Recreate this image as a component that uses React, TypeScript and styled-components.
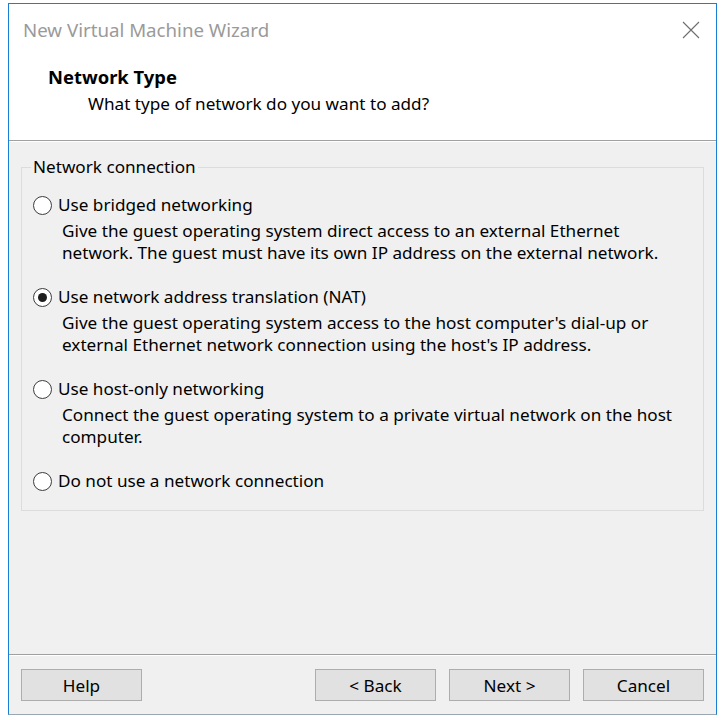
import React from "react";
import styled, { createGlobalStyle } from "styled-components";

const Global = createGlobalStyle`
  html, body { margin: 0; padding: 0; background: #ffffff; }
  body { font-family: "Noto Sans", "Open Sans", sans-serif; }
  * { box-sizing: border-box; }
`;

const Page = styled.div`
  padding: 3px 0 0 8px;
  width: 723px;
  height: 720px;
`;

const Window = styled.div`
  width: 709px;
  height: 712px;
  border: 1px solid #1a7fd2;
  border-bottom-color: #9aa6b0;
  display: flex;
  flex-direction: column;
  background: #f0f0f0;
  font-size: 17.15px;
  color: #000;
`;

const TitleBar = styled.div`
  height: 51px;
  background: #fff;
  display: flex;
  align-items: center;
  justify-content: space-between;
  padding: 0 16px 0 14px;
`;

const Title = styled.div`
  font-size: 18.7px;
  color: #9a9a9a;
`;

const CloseIcon = styled.svg`
  width: 18px;
  height: 18px;
  display: block;
`;

const Header = styled.div`
  height: 85px;
  background: #fff;
  padding: 11px 0 0 39px;
  display: flex;
  flex-direction: column;
`;

const HeaderTitle = styled.div`
  font-weight: 700;
  font-size: 18.4px;
  line-height: 22px;
`;

const HeaderSub = styled.div`
  line-height: 22px;
  margin: 5px 0 0 40px;
`;

const Etched = styled.div`
  height: 2px;
  border-top: 1px solid #a0a0a0;
  border-bottom: 1px solid #ffffff;
`;

const Body = styled.div`
  flex: 1;
  padding: 15px 12px 0 12px;
`;

const Group = styled.fieldset`
  margin: 0;
  border: 1px solid #dcdcdc;
  padding: 17px 0 18px 0;
`;

const Legend = styled.legend`
  padding: 0 2px;
  margin-left: 9px;
  line-height: 20px;
`;

const OptionList = styled.div`
  display: flex;
  flex-direction: column;
  gap: 22px;
  padding-left: 11px;
`;

const Option = styled.div`
  display: flex;
  flex-direction: column;
`;

const RadioRow = styled.label`
  display: flex;
  align-items: center;
  line-height: 22px;
  gap: 6px;
`;

const RadioCircle = styled.span<{ $checked?: boolean }>`
  flex-shrink: 0;
  width: 19px;
  height: 19px;
  border-radius: 50%;
  border: 1.5px solid #3c3c3c;
  background: #fff;
  display: flex;
  align-items: center;
  justify-content: center;
  &::after {
    content: "";
    width: 9px;
    height: 9px;
    border-radius: 50%;
    background: #1e1e1e;
    display: ${(p) => (p.$checked ? "block" : "none")};
  }
`;

const Desc = styled.div`
  margin: 4px 0 0 29px;
  line-height: 22px;
`;

const Footer = styled.div`
  height: 58px;
  padding: 13px 12px 0 12px;
  display: flex;
  align-items: flex-start;
`;

const Button = styled.button`
  width: 121px;
  height: 32px;
  background: #e1e1e1;
  border: 1px solid #adadad;
  font-family: inherit;
  font-size: 17.15px;
  color: #000;
  padding: 0;
`;

const Spacer = styled.div`
  flex: 1;
`;

const ButtonGroup = styled.div`
  display: flex;
  gap: 13px;
`;

const options = [
  {
    label: "Use bridged networking",
    desc: [
      "Give the guest operating system direct access to an external Ethernet",
      "network. The guest must have its own IP address on the external network.",
    ],
  },
  {
    label: "Use network address translation (NAT)",
    checked: true,
    desc: [
      "Give the guest operating system access to the host computer's dial-up or",
      "external Ethernet network connection using the host's IP address.",
    ],
  },
  {
    label: "Use host-only networking",
    desc: [
      "Connect the guest operating system to a private virtual network on the host",
      "computer.",
    ],
  },
  { label: "Do not use a network connection", desc: [] as string[] },
];

export default function App() {
  return (
    <>
      <Global />
      <Page>
        <Window>
          <TitleBar>
            <Title>New Virtual Machine Wizard</Title>
            <CloseIcon viewBox="0 0 18 18">
              <path d="M1 1 L17 17 M17 1 L1 17" stroke="#6e6e6e" strokeWidth="1.1" fill="none" />
            </CloseIcon>
          </TitleBar>
          <Header>
            <HeaderTitle>Network Type</HeaderTitle>
            <HeaderSub>What type of network do you want to add?</HeaderSub>
          </Header>
          <Etched />
          <Body>
            <Group>
              <Legend>Network connection</Legend>
              <OptionList>
                {options.map((o) => (
                  <Option key={o.label}>
                    <RadioRow>
                      <RadioCircle $checked={o.checked} />
                      {o.label}
                    </RadioRow>
                    {o.desc.length > 0 && (
                      <Desc>
                        {o.desc.map((d) => (
                          <div key={d}>{d}</div>
                        ))}
                      </Desc>
                    )}
                  </Option>
                ))}
              </OptionList>
            </Group>
          </Body>
          <Etched />
          <Footer>
            <Button>Help</Button>
            <Spacer />
            <ButtonGroup>
              <Button>&lt; Back</Button>
              <Button>Next &gt;</Button>
              <Button>Cancel</Button>
            </ButtonGroup>
          </Footer>
        </Window>
      </Page>
    </>
  );
}
